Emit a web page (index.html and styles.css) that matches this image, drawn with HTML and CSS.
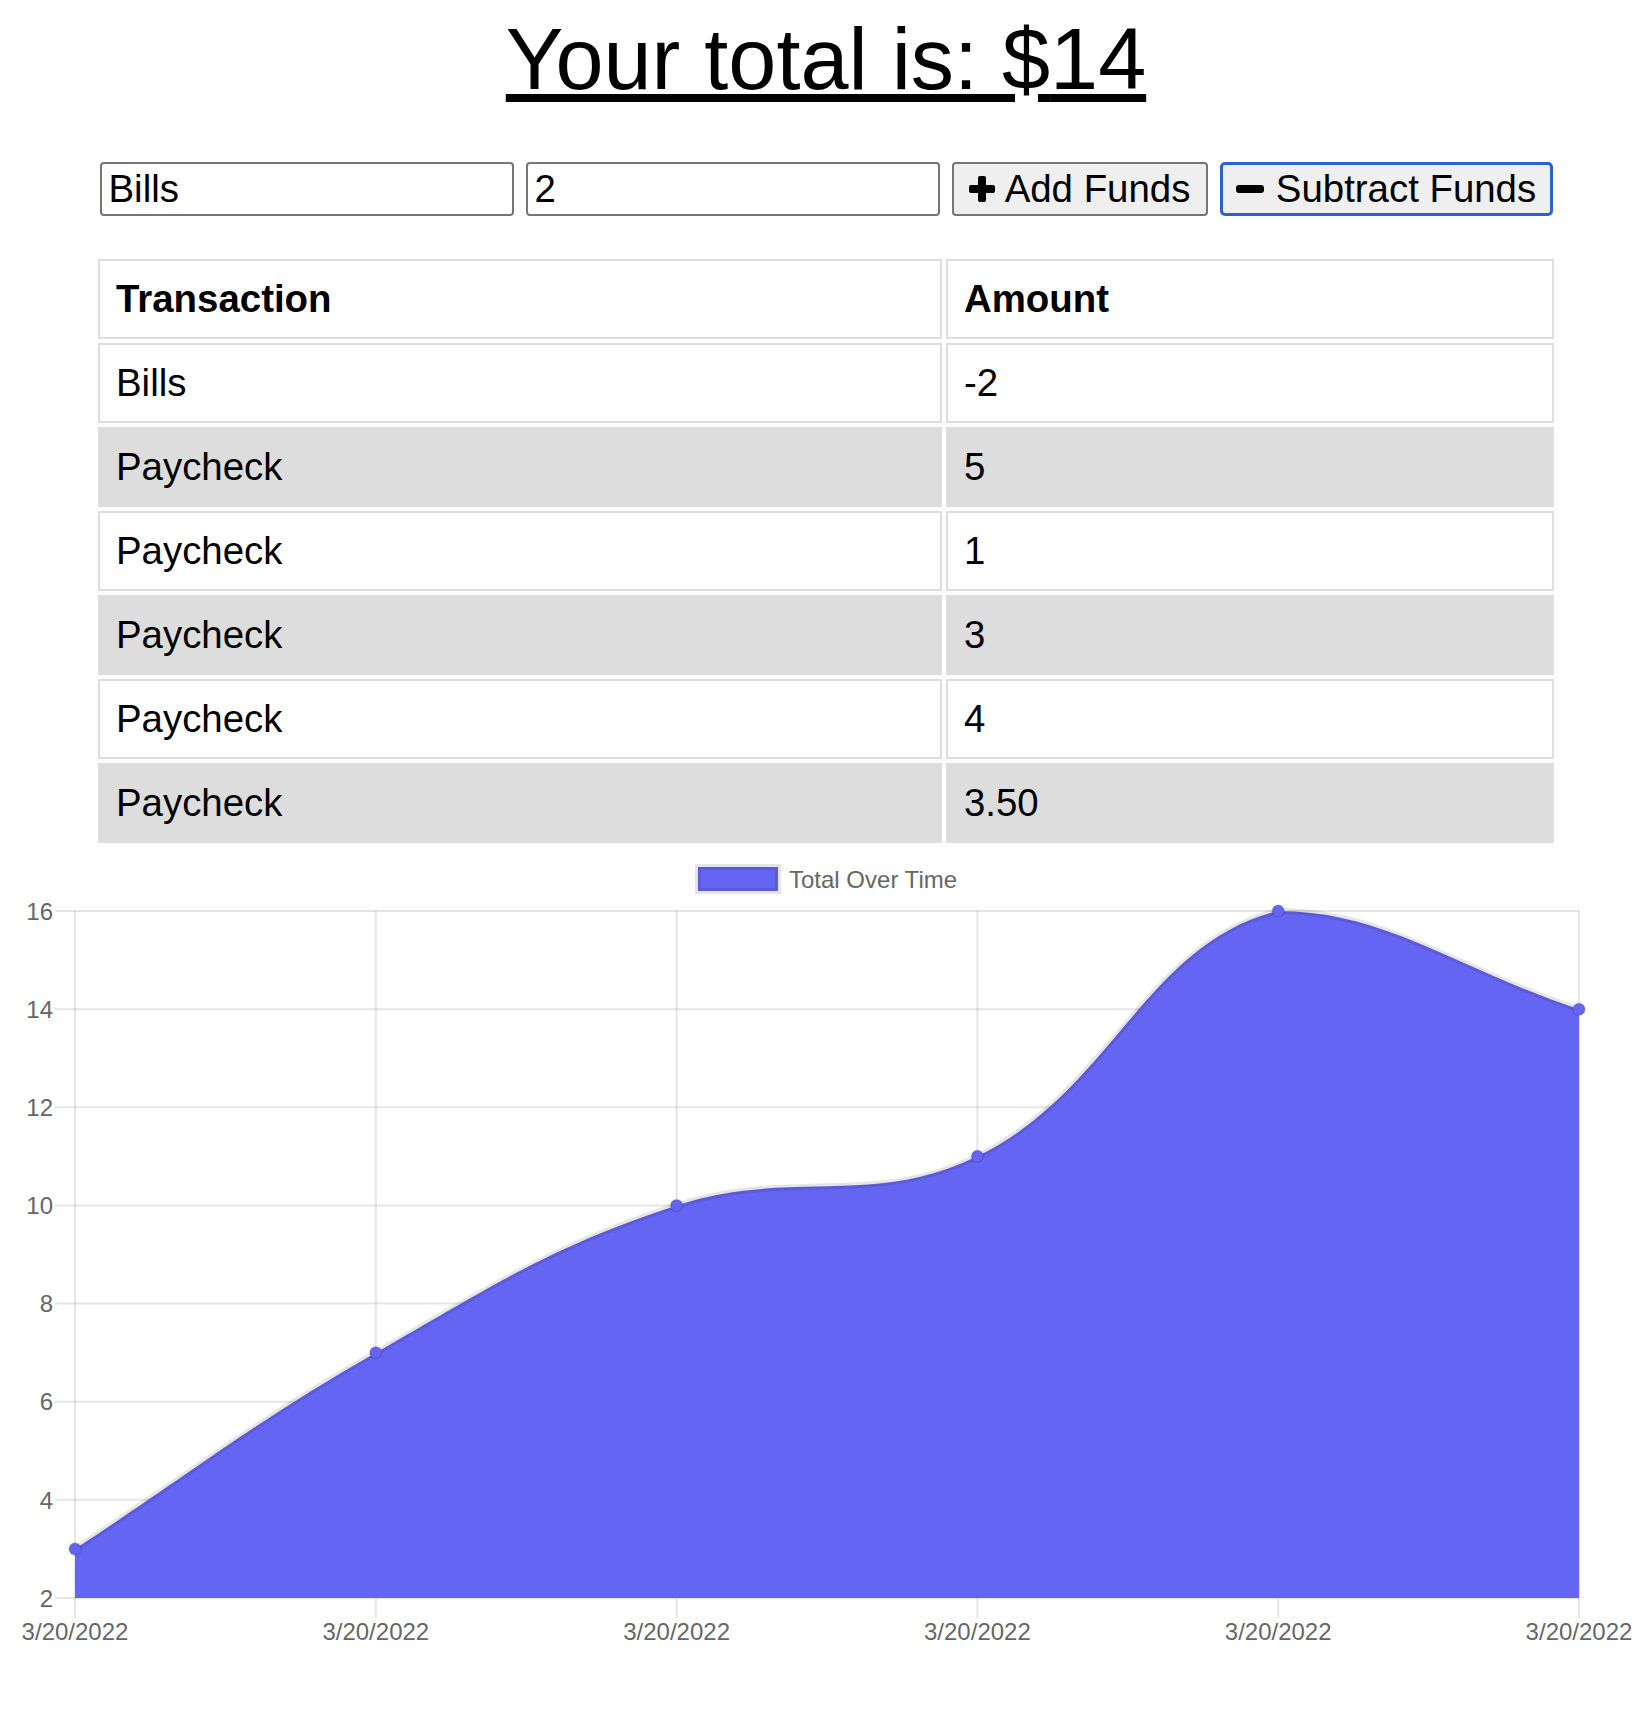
FILE: index.html
```html
<!DOCTYPE html>
<html lang="en">
<head>
<meta charset="utf-8">
<title>Budget Tracker</title>
<link rel="stylesheet" href="styles.css">
</head>
<body>
<div class="wrapper">
  <div class="total">Your total is: $<span id="total">14</span></div>

  <div class="form">
    <input type="text" class="field" value="Bills">
    <input type="text" class="field" value="2">
    <button class="btn btn-add" type="button">
      <svg class="icon-plus" width="26" height="28" viewBox="0 0 26 28" aria-hidden="true"><rect x="9" y="1" width="8" height="26" rx="2"/><rect x="0" y="10" width="26" height="8" rx="2"/></svg>
      <span>Add Funds</span>
    </button>
    <button class="btn btn-sub" type="button">
      <svg class="icon-minus" width="28" height="8" viewBox="0 0 28 8" aria-hidden="true"><rect x="0" y="0" width="28" height="8" rx="3"/></svg>
      <span>Subtract Funds</span>
    </button>
  </div>

  <table class="transactions">
    <thead>
      <tr><th class="col-name">Transaction</th><th>Amount</th></tr>
    </thead>
    <tbody>
      <tr><td>Bills</td><td>-2</td></tr>
      <tr><td>Paycheck</td><td>5</td></tr>
      <tr><td>Paycheck</td><td>1</td></tr>
      <tr><td>Paycheck</td><td>3</td></tr>
      <tr><td>Paycheck</td><td>4</td></tr>
      <tr><td>Paycheck</td><td>3.50</td></tr>
    </tbody>
  </table>

  <svg class="chart" width="1620" height="810" viewBox="16 847 1620 810">
    <g class="legend">
      <rect class="legend-box" x="698" y="867" width="80" height="24"/>
      <text class="legend-text" x="789" y="888">Total Over Time</text>
    </g>
    <g class="grid">
      <line x1="55" y1="911" x2="1579" y2="911"/>
      <line x1="55" y1="1009.14" x2="1579" y2="1009.14"/>
      <line x1="55" y1="1107.29" x2="1579" y2="1107.29"/>
      <line x1="55" y1="1205.43" x2="1579" y2="1205.43"/>
      <line x1="55" y1="1303.57" x2="1579" y2="1303.57"/>
      <line x1="55" y1="1401.71" x2="1579" y2="1401.71"/>
      <line x1="55" y1="1499.86" x2="1579" y2="1499.86"/>
      <line x1="55" y1="1598" x2="1579" y2="1598"/>
      <line x1="75" y1="911" x2="75" y2="1618"/>
      <line x1="375.8" y1="911" x2="375.8" y2="1618"/>
      <line x1="676.6" y1="911" x2="676.6" y2="1618"/>
      <line x1="977.4" y1="911" x2="977.4" y2="1618"/>
      <line x1="1278.2" y1="911" x2="1278.2" y2="1618"/>
      <line x1="1579" y1="911" x2="1579" y2="1618"/>
    </g>
    <g class="ylabels">
      <text x="53" y="919.6">16</text>
      <text x="53" y="1017.7">14</text>
      <text x="53" y="1115.9">12</text>
      <text x="53" y="1214">10</text>
      <text x="53" y="1312.2">8</text>
      <text x="53" y="1410.3">6</text>
      <text x="53" y="1508.5">4</text>
      <text x="53" y="1606.6">2</text>
    </g>
    <g class="xlabels">
      <text x="75" y="1640">3/20/2022</text>
      <text x="375.8" y="1640">3/20/2022</text>
      <text x="676.6" y="1640">3/20/2022</text>
      <text x="977.4" y="1640">3/20/2022</text>
      <text x="1278.2" y="1640">3/20/2022</text>
      <text x="1579" y="1640">3/20/2022</text>
    </g>
    <path class="area" d="M75 1548.93 C195.32 1470.41 251.27 1423.74 375.8 1352.64 C491.91 1286.34 550.62 1246.53 676.6 1205.43 C791.26 1168.02 871.58 1208.15 977.4 1156.36 C1112.22 1090.38 1145.61 943.45 1278.2 911 C1386.25 911 1458.68 969.88 1579 1009.14 L1579 1598 L75 1598 Z"/>
    <path class="line" d="M75 1548.93 C195.32 1470.41 251.27 1423.74 375.8 1352.64 C491.91 1286.34 550.62 1246.53 676.6 1205.43 C791.26 1168.02 871.58 1208.15 977.4 1156.36 C1112.22 1090.38 1145.61 943.45 1278.2 911 C1386.25 911 1458.68 969.88 1579 1009.14"/>
    <g class="points">
      <circle cx="75" cy="1548.93" r="6"/>
      <circle cx="375.8" cy="1352.64" r="6"/>
      <circle cx="676.6" cy="1205.43" r="6"/>
      <circle cx="977.4" cy="1156.36" r="6"/>
      <circle cx="1278.2" cy="911" r="6"/>
      <circle cx="1579" cy="1009.14" r="6"/>
    </g>
  </svg>
</div>
</body>
</html>
```

FILE: styles.css
```css
* {
  box-sizing: border-box;
}

body {
  margin: 0;
  background: #fff;
  color: #000;
  font-family: "Liberation Sans", Arial, Helvetica, sans-serif;
}

.wrapper {
  width: 1620px;
  margin: 0 auto;
  padding-top: 10px;
}

.total {
  font-size: 86.4px;
  line-height: 99px;
  text-align: center;
  text-decoration: underline;
}

.form {
  display: flex;
  justify-content: center;
  gap: 12px;
  margin-top: 53px;
}

.field {
  width: 414px;
  height: 54px;
  margin: 0;
  padding: 0 7px;
  border: 2px solid #767676;
  border-radius: 4px;
  background: #fff;
  color: #000;
  font-family: inherit;
  font-size: 38.4px;
  outline: none;
}

.btn {
  display: flex;
  align-items: center;
  justify-content: center;
  gap: 10px;
  height: 54px;
  margin: 0;
  padding: 0;
  background: #efefef;
  border: 2px solid #767676;
  border-radius: 4px;
  color: #000;
  font-family: inherit;
  font-size: 38.4px;
}

.btn svg {
  fill: #000;
  flex: none;
}

.btn-add {
  width: 256px;
}

.btn-sub {
  width: 333px;
  gap: 12px;
  border: 3px solid #2b62cf;
  border-radius: 5px;
}

.transactions {
  width: 1464px;
  margin: 39px auto 0;
  border-spacing: 4px;
  table-layout: fixed;
  font-size: 38.4px;
}

.transactions th,
.transactions td {
  padding: 16px;
  border: 2px solid #ddd;
  line-height: 44px;
  text-align: left;
}

.transactions th {
  font-weight: bold;
}

.transactions .col-name {
  width: 844px;
}

.transactions tbody tr:nth-child(even) td {
  background: #ddd;
}

.chart {
  display: block;
}

.chart text {
  font-family: "Liberation Sans", Arial, Helvetica, sans-serif;
  font-size: 24px;
  fill: #666;
}

.legend-box {
  fill: #6565f4;
  stroke: rgba(0, 0, 0, 0.1);
  stroke-width: 6;
}

.grid line {
  stroke: rgba(0, 0, 0, 0.1);
  stroke-width: 2;
}

.ylabels text {
  text-anchor: end;
}

.xlabels text {
  text-anchor: middle;
}

.area {
  fill: #6565f4;
}

.line {
  fill: none;
  stroke: rgba(0, 0, 0, 0.1);
  stroke-width: 6;
}

.points circle {
  fill: #6565f4;
  stroke: rgba(0, 0, 0, 0.1);
  stroke-width: 2;
}
```
